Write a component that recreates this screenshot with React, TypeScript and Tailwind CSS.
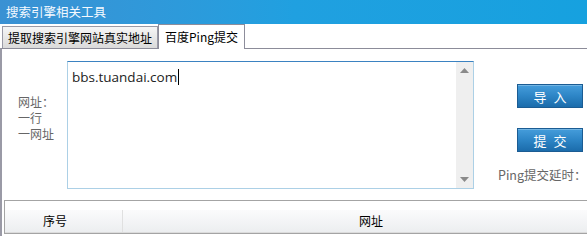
import React from "react";

const cjk = { fontFamily: '"Noto Sans CJK SC", "Noto Sans", sans-serif' };

function BlueButton({ label }: { label: string }) {
  return (
    <button
      className="flex h-[24px] w-[66px] items-center justify-center border border-[#1b5c93] bg-gradient-to-b from-[#459ddb] via-[#2d85c6] to-[#1b6cab] text-[13px] tracking-[7px] text-white shadow-[inset_0_1px_0_rgba(255,255,255,0.25)]"
      style={cjk}
    >
      <span className="pl-[7px] leading-none">{label}</span>
    </button>
  );
}

export default function App() {
  return (
    <div className="h-[236px] w-[587px] overflow-hidden bg-white text-[12px] text-black" style={cjk}>
      {/* title bar */}
      <div className="flex h-[24px] items-center bg-gradient-to-r from-[#3a91d3] via-[#20a0e0] to-[#16a1df] pl-[6px] text-[12.5px] text-[#f4f9ff]">
        搜索引擎相关工具
      </div>

      {/* tabs */}
      <div className="flex h-[24px] items-end pl-[2px]">
        <div className="flex h-[22px] items-center border border-b-0 border-[#9a9aa6] bg-gradient-to-b from-[#f6f6f6] to-[#dadada] px-[5px] leading-none">
          提取搜索引擎网站真实地址
        </div>
        <div className="relative -mb-px flex h-[25px] items-center border border-b-0 border-[#8d8d9b] bg-white px-[6px] leading-none">
          百度Ping提交
        </div>
        <div className="flex-1" />
      </div>

      {/* content */}
      <div className="h-[200px] border-l-2 border-t border-[#8c8c99] border-l-[#9a9aa6]">
        <div className="flex pt-[12px]">
          <div className="flex w-[65px] flex-col justify-center pb-[14px] pl-[16px] text-[12px] leading-[16px] text-[#666]">
            <span>网址：</span>
            <span>一行</span>
            <span>一网址</span>
          </div>

          <div className="flex h-[128px] w-[407px] border border-[#acd0e6] border-t-[#3b82c1]">
            <div className="flex-1 pl-[4px] pt-[4px]">
              <span className="text-[13.5px] text-[#222]" style={{ fontFamily: '"Open Sans", "Noto Sans", sans-serif' }}>
                bbs.tuandai.com
              </span>
              <span className="ml-[1px] inline-block h-[16px] w-px translate-y-[3px] bg-black" />
            </div>
            <div className="flex w-[17px] flex-col items-center justify-between bg-[#efefef] py-[6px]">
              <svg width="9" height="5" viewBox="0 0 9 5">
                <path d="M4.5 0 L9 5 L0 5 Z" fill="#8a8a8a" />
              </svg>
              <svg width="9" height="5" viewBox="0 0 9 5">
                <path d="M0 0 L9 0 L4.5 5 Z" fill="#8a8a8a" />
              </svg>
            </div>
          </div>

          <div className="flex w-[90px] flex-col pl-[23px] pt-[23px]">
            <div className="flex flex-col gap-[20px] pl-[20px]">
              <BlueButton label="导入" />
              <BlueButton label="提交" />
            </div>
            <div className="mt-[17px] whitespace-nowrap pl-[1px] text-[12.5px] leading-none text-[#666]">Ping提交延时：</div>
          </div>
        </div>

        {/* list header */}
        <div className="mt-[11px] pl-[2px]">
          <div className="w-[620px] border border-[#a4a4a4] pt-[9px]">
            <div className="flex h-[23px] border-b border-[#dcdcdc] bg-gradient-to-b from-[#fbfbfc] to-[#eceef0]">
              <div className="flex w-[118px] items-center border-r border-[#e0e0e0] pl-[38px]">序号</div>
              <div className="flex flex-1 items-center justify-center pr-[4px]">网址</div>
            </div>
          </div>
        </div>
      </div>
    </div>
  );
}
